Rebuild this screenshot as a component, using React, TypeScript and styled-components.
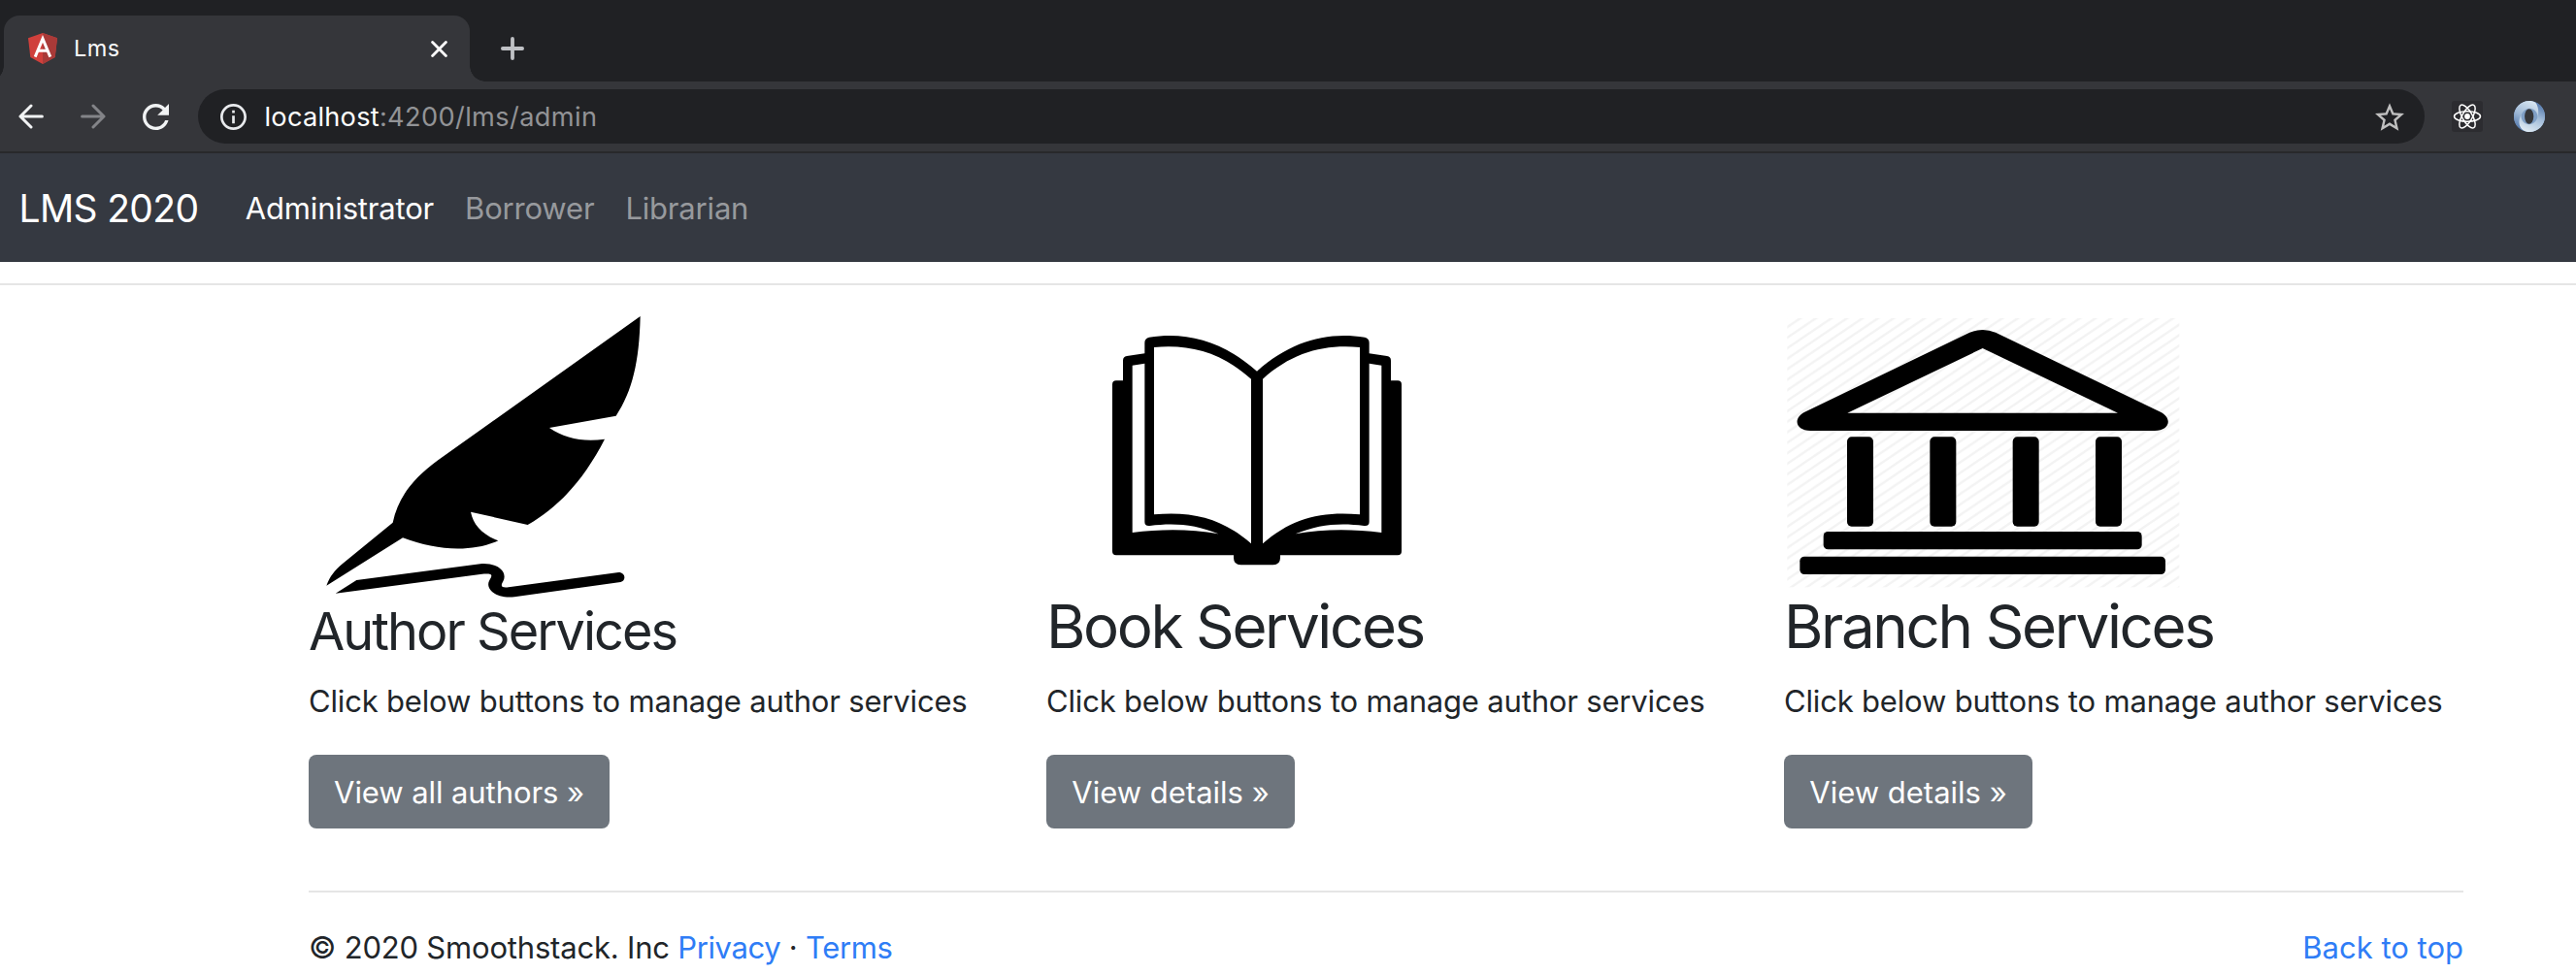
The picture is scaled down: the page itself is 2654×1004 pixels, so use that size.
import React from 'react';
import styled, { createGlobalStyle } from 'styled-components';

const GlobalStyle = createGlobalStyle`
  * { box-sizing: border-box; }
  html, body { margin: 0; padding: 0; background: #fff; overflow: hidden; }
  body { font-family: Inter, "Noto Sans", sans-serif; color: #212529; font-size: 31px; }
  svg { display: block; flex: none; }
  a { text-decoration: none; }
`;

const Window = styled.div`
  width: 100%;
  height: 1004px;
  display: flex;
  flex-direction: column;
  overflow: hidden;
  background: #fff;
`;

/* ---------- Browser chrome ---------- */

const TabStrip = styled.div`
  height: 84px;
  flex: none;
  display: flex;
  align-items: flex-end;
  padding-left: 4px;
  background: #202124;
`;

const Tab = styled.div`
  position: relative;
  width: 480px;
  height: 68px;
  display: flex;
  align-items: center;
  padding: 0 23px 0 25px;
  background: #35363a;
  border-radius: 16px 16px 0 0;

  &::before,
  &::after {
    content: '';
    position: absolute;
    bottom: 0;
    width: 16px;
    height: 16px;
  }
  &::before {
    left: -16px;
    background: radial-gradient(circle at 0 0, transparent 15.5px, #35363a 16px);
  }
  &::after {
    right: -16px;
    background: radial-gradient(circle at 100% 0, transparent 15.5px, #35363a 16px);
  }
`;

const TabTitle = styled.span`
  flex: 1;
  margin-left: 17px;
  font-size: 23.5px;
  line-height: 34px;
  letter-spacing: 0.4px;
  color: #f7f8f9;
`;

const NewTab = styled.div`
  height: 68px;
  margin-left: 32px;
  display: flex;
  align-items: center;
`;

const Toolbar = styled.div`
  height: 74px;
  flex: none;
  display: flex;
  align-items: center;
  padding: 0 32px 0 19px;
  background: #35363a;
  border-bottom: 2px solid #28292b;
`;

const NavControls = styled.div`
  display: flex;
  align-items: center;
  gap: 38px;
`;

const AddressBar = styled.div`
  flex: 1;
  height: 56px;
  margin-left: 30px;
  padding: 0 21px 0 23px;
  display: flex;
  align-items: center;
  border-radius: 28px;
  background: #202124;
`;

const Url = styled.span`
  flex: 1;
  margin-left: 18.5px;
  font-size: 27.2px;
  line-height: 40px;
  padding-top: 1px;
  letter-spacing: 0.36px;
  color: #929396;
`;

const Host = styled.span`
  color: #fff;
  letter-spacing: 0.25px;
`;

const Extensions = styled.div`
  display: flex;
  align-items: center;
  gap: 32px;
  margin-left: 28px;
`;

/* ---------- Page ---------- */

const Navbar = styled.nav`
  height: 112px;
  flex: none;
  display: flex;
  align-items: center;
  padding: 1px 0 0 19.5px;
  background: #353941;
`;

const Brand = styled.a`
  margin-right: 48.5px;
  font-size: 39px;
  line-height: 60px;
  letter-spacing: -0.65px;
  color: #fff;
`;

const NavLinks = styled.div`
  display: flex;
  gap: 32px;
`;

const NavLink = styled.a<{ $active?: boolean }>`
  line-height: 48px;
  letter-spacing: -0.18px;
  color: ${(p) => (p.$active ? '#fff' : '#97999d')};
`;

const Rule = styled.hr`
  width: 100%;
  height: 2px;
  flex: none;
  margin: 0;
  border: 0;
  background: #e5e5e5;
`;

const PageRule = styled(Rule)`
  margin-top: 22px;
`;

const Main = styled.main`
  width: 2220px;
  margin: 30px 0 0 318px;
  display: flex;
  flex-direction: column;
`;

const Services = styled.section`
  display: grid;
  grid-template-columns: repeat(3, 760px);
  margin-bottom: 64px;
`;

const Service = styled.article`
  display: flex;
  flex-direction: column;
  align-items: flex-start;
`;

const ServiceTitle = styled.h2<{ $large?: boolean; $tracking: number }>`
  margin: 0 0 ${(p) => (p.$large ? 15 : 16)}px;
  padding-top: 1px;
  font-weight: 400;
  font-size: ${(p) => (p.$large ? 61.8 : 54)}px;
  line-height: ${(p) => (p.$large ? 76 : 64)}px;
  letter-spacing: ${(p) => p.$tracking}px;
  white-space: nowrap;
`;

const ServiceText = styled.p`
  margin: 0 0 31px;
  line-height: 48px;
  letter-spacing: -0.175px;
  white-space: nowrap;
`;

const Button = styled.a<{ $wide?: boolean }>`
  width: ${(p) => (p.$wide ? 310 : 256)}px;
  height: 76px;
  border-radius: 8px;
  background: #6e757d;
  color: #fff;
  line-height: 77px;
  letter-spacing: ${(p) => (p.$wide ? -0.08 : 0)}px;
  text-align: center;
  white-space: nowrap;
`;

const Footer = styled.footer`
  display: flex;
  justify-content: space-between;
  margin-top: 33px;
  line-height: 48px;
  letter-spacing: -0.19px;
`;

const Link = styled.a`
  color: #2f7df6;
  letter-spacing: -0.4px;
`;

const TopLink = styled(Link)`
  letter-spacing: 0;
`;

/* ---------- Icons ---------- */

const AngularIcon = () => (
  <svg width="30" height="32" viewBox="0 0 30 32">
    <path d="M15 0 30 5.2 27.7 25 15 32 2.3 25 0 5.2Z" fill="#d0403c" />
    <path d="M15 0 30 5.2 27.7 25 15 32Z" fill="#a93a38" />
    <path d="M7.2 24.6 15 6 22.8 24.6M10.6 18.2H19.4" fill="none" stroke="#fff" strokeWidth="3" />
  </svg>
);

const CloseIcon = () => (
  <svg width="17" height="17" viewBox="0 0 17 17" fill="none" stroke="#fff" strokeWidth="2.8" strokeLinecap="round">
    <path d="M1.6 1.6 15.4 15.4M15.4 1.6 1.6 15.4" />
  </svg>
);

const PlusIcon = () => (
  <svg width="24" height="24" viewBox="0 0 24 24" fill="none" stroke="#bfc1c5" strokeWidth="3.8" strokeLinecap="round">
    <path d="M12 1.9V22.1M1.9 12H22.1" />
  </svg>
);

const BackIcon = () => (
  <svg width="26" height="26" viewBox="0 0 26 26" fill="none" stroke="#f1f3f4" strokeWidth="3" strokeLinecap="round" strokeLinejoin="round">
    <path d="M24.4 13H2M13 2 2 13 13 24" />
  </svg>
);

const ForwardIcon = () => (
  <svg width="26" height="26" viewBox="0 0 26 26" fill="none" stroke="#838488" strokeWidth="3" strokeLinecap="round" strokeLinejoin="round">
    <path d="M1.6 13H24M13 2 24 13 13 24" />
  </svg>
);

const ReloadIcon = () => (
  <svg width="27" height="27" viewBox="4 4 16 16" fill="#f1f3f4">
    <path d="M17.65 6.35C16.2 4.9 14.21 4 12 4c-4.42 0-7.99 3.58-7.99 8s3.57 8 7.99 8c3.73 0 6.84-2.55 7.73-6h-2.08c-.82 2.33-3.04 4-5.65 4-3.31 0-6-2.69-6-6s2.69-6 6-6c1.66 0 3.14.69 4.22 1.78L13 11h7V4l-2.35 2.35z" />
  </svg>
);

const InfoIcon = () => (
  <svg width="27" height="27" viewBox="2 2 20 20" fill="#e8eaed">
    <path d="M11 7h2v2h-2zm0 4h2v6h-2zm1-9C6.480 2 2 6.480 2 12s4.480 10 10 10 10-4.480 10-10S17.520 2 12 2zm0 18c-4.410 0-8-3.590-8-8s3.590-8 8-8 8 3.590 8 8-3.590 8-8 8z" />
  </svg>
);

const StarIcon = () => (
  <svg width="30" height="29" viewBox="2 2 20 19" fill="#c0c0c0">
    <path d="M22 9.24l-7.19-.62L12 2 9.19 8.63 2 9.24l5.46 4.73L5.82 21 12 17.27 18.18 21l-1.63-7.03L22 9.24zM12 15.4l-3.76 2.27 1-4.28-3.32-2.88 4.38-.38L12 6.1l1.71 4.04 4.38.38-3.32 2.88 1 4.28L12 15.4z" />
  </svg>
);

const ReactIcon = () => (
  <svg width="32" height="32" viewBox="0 0 32 32" fill="none" stroke="#fff" strokeWidth="1.5">
    <rect width="32" height="32" rx="3" fill="#2c2c30" stroke="none" />
    <circle cx="16" cy="16" r="2.9" fill="#fff" stroke="none" />
    {[0, 60, 120].map((a) => (
      <ellipse key={a} cx="16" cy="16" rx="13.5" ry="5.2" transform={`rotate(${a} 16 16)`} />
    ))}
  </svg>
);

const SwirlIcon = () => (
  <svg width="32" height="32" viewBox="0 0 32 32">
    <defs>
      <linearGradient id="swirlA" x1="0.6" y1="0" x2="0.2" y2="1">
        <stop offset="0" stopColor="#d5e3ef" />
        <stop offset="0.5" stopColor="#9db8d6" />
        <stop offset="1" stopColor="#4a70a6" />
      </linearGradient>
      <linearGradient id="swirlB" x1="0.4" y1="1" x2="0.8" y2="0">
        <stop offset="0" stopColor="#dce8f2" />
        <stop offset="0.5" stopColor="#a3bdd9" />
        <stop offset="1" stopColor="#4a70a6" />
      </linearGradient>
    </defs>
    <circle cx="16" cy="16" r="16" fill="#7f9fc6" />
    <path d="M16 0C7 0 0 7 0 16c0 7 4 12.5 10 15C5 25 5 9 16 7.8c5 0 9 4 8.5 10C29 10 26 0 16 0Z" fill="url(#swirlA)" />
    <path d="M22 1.2C27 7 27 23 16 24.2c-5 0-9-4-8.5-10C3 22 6 32 16 32c9 0 16-7 16-16C32 9 28 3.5 22 1.2Z" fill="url(#swirlB)" />
    <ellipse cx="15.7" cy="16" rx="4.6" ry="7.8" fill="#35363a" />
  </svg>
);

/* ---------- Service artwork ---------- */

const QuillArt = () => (
  <svg width="380" height="294" viewBox="54 42 1140 882">
    <path d="M1079 48C1076 190 1054 280 1004 356L798 393C845 426 905 438 969 428C905 552 828 638 731 693L555 653C563 693 590 722 640 742C560 778 450 774 345 733L109 881C120 852 134 835 158 814L314 686C330 610 375 550 452 494Z" />
    <path d="M137 905 202 864 590 813C640 811 670 840 655 868C645 885 652 888 672 886L1012 840C1034 840 1036 866 1018 870L690 916C630 922 600 890 612 866C622 848 626 843 590 845Z" />
  </svg>
);

const BookArt = () => (
  <svg width="380" height="283" viewBox="-66 42 1140 849">
    <path d="M150 247H171V185Q171 173 183 171L238 163V130Q238 116 252 113C370 95 480 125 585 218C690 125 800 95 918 113Q932 116 932 130V163L987 171Q999 173 999 185V247H1020Q1032 247 1032 259V775Q1032 787 1020 787H657V795Q657 817 635 817H535Q513 817 513 795V787H150Q138 787 138 775V259Q138 247 150 247Z" />
    <g fill="#fff">
      <path d="M267 144C380 134 475 160 567 242V751C480 675 390 650 267 661Z" />
      <path d="M903 144C790 134 695 160 603 242V751C690 675 780 650 903 661Z" />
      <path d="M200 200 238 194V684Q238 698 254 696C330 686 395 692 466 721C380 705 290 705 200 717Z" />
      <path d="M970 200 932 194V684Q932 698 916 696C840 686 775 692 704 721C790 705 880 705 970 717Z" />
    </g>
  </svg>
);

const BankArt = () => (
  <svg width="460" height="283" viewBox="54 42 1380 849">
    <defs>
      <pattern id="hatch" width="48" height="32.5" patternUnits="userSpaceOnUse" x="60" y="52">
        <path d="M-12 40.6 60 -8.1M-12 8.1 12 -8.1M36 40.6 60 24.4" stroke="#f3f3f3" strokeWidth="7" />
      </pattern>
    </defs>
    <rect x="64" y="54" width="1212" height="832" fill="url(#hatch)" />
    <path
      fillRule="evenodd"
      d="M628 98Q668 82 708 98L1218 344C1256 364 1246 401 1200 402H136C90 401 80 364 118 344ZM668 147 250 347H1086Z"
    />
    {[249, 505, 761, 1017].map((x) => (
      <rect key={x} x={x} y="421" width="81" height="277" rx="14" />
    ))}
    <rect x="176" y="714" width="984" height="55" rx="14" />
    <rect x="103" y="791" width="1130" height="55" rx="14" />
  </svg>
);

const SERVICES = [
  { title: 'Author Services', art: <QuillArt />, action: 'View all authors »', large: false, tracking: -1.95 },
  { title: 'Book Services', art: <BookArt />, action: 'View details »', large: true, tracking: -2.35 },
  { title: 'Branch Services', art: <BankArt />, action: 'View details »', large: true, tracking: -2.35 },
];

export default function App() {
  return (
    <Window>
      <GlobalStyle />
      <TabStrip>
        <Tab>
          <AngularIcon />
          <TabTitle>Lms</TabTitle>
          <CloseIcon />
        </Tab>
        <NewTab>
          <PlusIcon />
        </NewTab>
      </TabStrip>
      <Toolbar>
        <NavControls>
          <BackIcon />
          <ForwardIcon />
          <ReloadIcon />
        </NavControls>
        <AddressBar>
          <InfoIcon />
          <Url>
            <Host>localhost</Host>:4200/lms/admin
          </Url>
          <StarIcon />
        </AddressBar>
        <Extensions>
          <ReactIcon />
          <SwirlIcon />
        </Extensions>
      </Toolbar>

      <Navbar>
        <Brand>LMS 2020</Brand>
        <NavLinks>
          <NavLink $active>Administrator</NavLink>
          <NavLink>Borrower</NavLink>
          <NavLink>Librarian</NavLink>
        </NavLinks>
      </Navbar>
      <PageRule />
      <Main>
        <Services>
          {SERVICES.map((s) => (
            <Service key={s.title}>
              {s.art}
              <ServiceTitle $large={s.large} $tracking={s.tracking}>
                {s.title}
              </ServiceTitle>
              <ServiceText>Click below buttons to manage author services</ServiceText>
              <Button $wide={!s.large}>{s.action}</Button>
            </Service>
          ))}
        </Services>
        <Rule />
        <Footer>
          <span>
            © 2020 Smoothstack. Inc <Link>Privacy</Link> · <Link>Terms</Link>
          </span>
          <TopLink>Back to top</TopLink>
        </Footer>
      </Main>
    </Window>
  );
}
